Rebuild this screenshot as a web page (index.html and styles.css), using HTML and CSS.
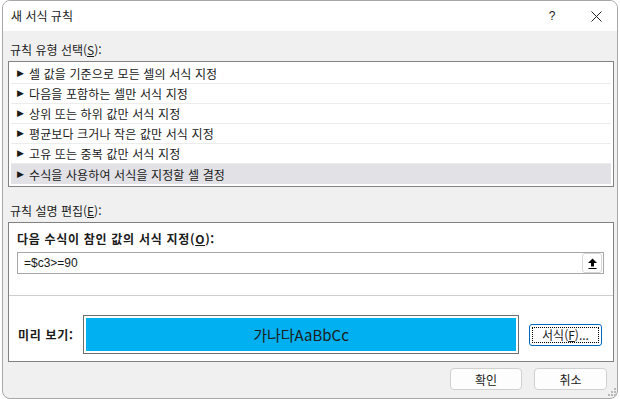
FILE: index.html
```html
<!DOCTYPE html>
<html lang="ko">
<head>
<meta charset="utf-8">
<title>새 서식 규칙</title>
<link rel="stylesheet" href="styles.css">
</head>
<body>
<div class="window">
  <div class="titlebar">
    <span class="title">새 서식 규칙</span>
    <span class="tb-help">?</span>
    <span class="tb-close">
      <svg width="11" height="11" viewBox="0 0 11 11"><path d="M0.5 0.5 L10.5 10.5 M10.5 0.5 L0.5 10.5" stroke="#222" stroke-width="1" fill="none"/></svg>
    </span>
  </div>
  <div class="content">
    <div class="label label-first">규칙 유형 선택(<u>S</u>):</div>
    <div class="listbox">
      <div class="row"><span class="arrow">▶</span>셀 값을 기준으로 모든 셀의 서식 지정</div>
      <div class="row"><span class="arrow">▶</span>다음을 포함하는 셀만 서식 지정</div>
      <div class="row"><span class="arrow">▶</span>상위 또는 하위 값만 서식 지정</div>
      <div class="row"><span class="arrow">▶</span>평균보다 크거나 작은 값만 서식 지정</div>
      <div class="row"><span class="arrow">▶</span>고유 또는 중복 값만 서식 지정</div>
      <div class="row row-selected"><span class="arrow">▶</span>수식을 사용하여 서식을 지정할 셀 결정</div>
    </div>
    <div class="label label-second">규칙 설명 편집(<u>E</u>):</div>
    <div class="panel">
      <div class="panel-top">
        <div class="bold-label">다음 수식이 참인 값의 서식 지정(<u>O</u>):</div>
        <div class="formula">
          <span class="formula-text">=$c3&gt;=90</span>
          <span class="collapse-btn">
            <svg width="9" height="11" viewBox="0 0 9 11"><polygon points="0,5 4.5,0.5 9,5" fill="#000"/><rect x="3" y="4.5" width="3" height="4" fill="#000"/><rect x="0.5" y="10" width="8" height="1" fill="#000"/></svg>
          </span>
        </div>
      </div>
      <div class="panel-bottom">
        <div class="bold-label preview-label">미리 보기:</div>
        <div class="preview"><div class="preview-inner">가나다AaBbCc</div></div>
        <div class="format-btn"><span class="focus">서식(<u>F</u>)...</span></div>
      </div>
    </div>
    <div class="footer">
      <div class="btn">확인</div>
      <div class="btn btn-cancel">취소</div>
    </div>
  </div>
  <svg class="grip" width="8" height="8" viewBox="0 0 8 8"><g fill="#b8b8b8"><rect x="6" y="0" width="2" height="2"/><rect x="3" y="3" width="2" height="2"/><rect x="6" y="3" width="2" height="2"/><rect x="0" y="6" width="2" height="2"/><rect x="3" y="6" width="2" height="2"/><rect x="6" y="6" width="2" height="2"/></g></svg>
</div>
</body>
</html>
```
FILE: styles.css
```css
* { box-sizing: border-box; }
html, body {
  margin: 0;
  padding: 0;
  background: #ffffff;
}
body {
  font-family: "Noto Sans CJK KR", "Noto Sans", sans-serif;
  font-size: 12px;
  color: #1a1a1a;
  padding: 0 2px;
}
u { text-decoration: underline; text-underline-offset: 1px; }
.window {
  position: relative;
  width: 616px;
  height: 399px;
  background: #f0f0f0;
  border: 1px solid #a8a8a8;
  border-radius: 8px 8px 8px 8px;
  overflow: hidden;
}
.titlebar {
  height: 30px;
  background: #ffffff;
  display: flex;
  align-items: center;
  padding-left: 8px;
}
.title {
  font-size: 12px;
  flex: 1;
  line-height: 16px;
}
.tb-help {
  width: 46px;
  text-align: center;
  font-size: 12px;
  line-height: 16px;
  font-family: "Liberation Sans", sans-serif;
}
.tb-close {
  width: 42px;
  display: flex;
  justify-content: center;
}
.content {
  padding: 0 3px 0 5px;
}
.label {
  line-height: 16px;
}
.label-first { margin-top: 11px; padding-left: 2px; }
.label-second { margin-top: 16px; padding-left: 2px; }
.listbox {
  margin-top: 3px;
  height: 126px;
  background: #ffffff;
  border: 1px solid #828282;
  padding: 2px 2px;
}
.row {
  height: 20px;
  line-height: 19px;
  border-bottom: 1px solid #ececec;
  padding-left: 6px;
  display: flex;
  align-items: center;
  font-size: 12px;
  letter-spacing: 0.12px;
}
.row-selected {
  background: #e1e1e6;
  border-bottom: none;
}
.arrow {
  font-size: 9px;
  width: 12px;
  font-family: "DejaVu Sans", sans-serif;
  letter-spacing: 0;
}
.panel {
  margin-top: 3px;
  background: #ffffff;
  border: 1px solid #828282;
  height: 140px;
  display: flex;
  flex-direction: column;
}
.panel-top {
  padding: 8px 9px 0 8px;
  height: 73px;
  border-bottom: 1px solid #cfcfcf;
}
.bold-label {
  font-weight: bold;
  line-height: 16px;
  font-size: 12px;
  letter-spacing: 0.7px;
}
.formula {
  margin-top: 5px;
  height: 22px;
  border: 1px solid #a6a6a6;
  display: flex;
  align-items: center;
  padding-left: 6px;
}
.formula-text {
  flex: 1;
  font-family: "Liberation Sans", sans-serif;
  font-size: 12px;
  line-height: 16px;
}
.collapse-btn {
  width: 20px;
  height: 20px;
  margin-right: 1px;
  border: 1px solid #d6d6d6;
  border-radius: 3px;
  display: flex;
  align-items: center;
  justify-content: center;
}
.panel-bottom {
  flex: 1;
  display: flex;
  align-items: center;
  padding: 12px 10px 0 9px;
}
.preview-label {
  width: 65px;
}
.preview {
  width: 436px;
  height: 39px;
  border: 1px solid #6e6e6e;
  padding: 2px;
}
.preview-inner {
  height: 100%;
  background: #00b0f0;
  display: flex;
  align-items: center;
  justify-content: center;
  font-size: 15px;
  color: #1c1c1c;
}
.format-btn {
  margin-left: 10px;
  width: 73px;
  height: 22px;
  border: 1px solid #0067c0;
  border-radius: 3px;
  padding: 2px;
  background: #fdfdfd;
}
.focus {
  display: flex;
  height: 100%;
  align-items: center;
  justify-content: center;
  border: 1px dotted #000;
  font-size: 12px;
}
.footer {
  display: flex;
  justify-content: flex-end;
  gap: 12px;
  margin-top: 6px;
  padding-right: 7px;
}
.btn {
  width: 72px;
  height: 22px;
  background: #fdfdfd;
  border: 1px solid #d0d0d0;
  border-radius: 4px;
  display: flex;
  align-items: center;
  justify-content: center;
  font-size: 12px;
}
.btn-cancel { width: 73px; }
.grip {
  position: absolute;
  right: 1px;
  bottom: 2px;
}
```
